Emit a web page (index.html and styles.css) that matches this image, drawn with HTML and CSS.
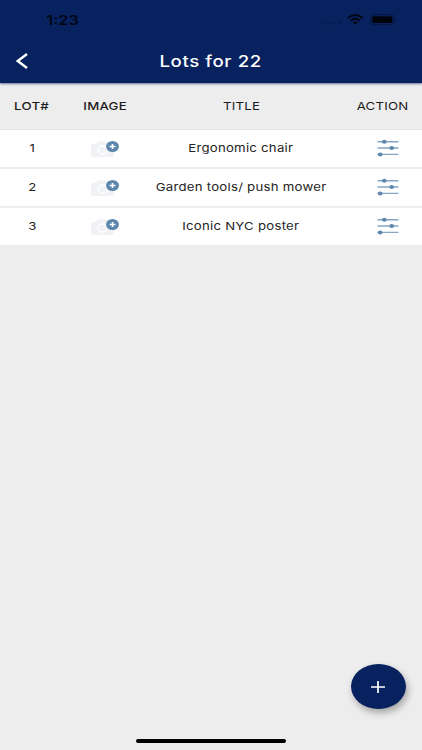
FILE: index.html
```html
<!DOCTYPE html>
<html lang="en">
<head>
    <meta charset="UTF-8">
    <meta name="viewport" content="width=device-width, initial-scale=1.0">
    <title>Lots for 22</title>
    <link rel="stylesheet" href="styles.css">
</head>
<body>
    <svg class="symbols" width="0" height="0">
        <symbol id="camera" viewBox="0 0 30 20">
            <path fill="#f0f2f5" d="M3 5h3l2-2.500h9l2 2.500h3q2 0 2 2v9q0 2-2 2H3q-2 0-2-2V7q0-2 2-2z"/>
            <ellipse cx="12.500" cy="11" rx="4.700" ry="4" fill="none" stroke="#fff" stroke-width="1.400"/>
            <ellipse cx="22.500" cy="7.500" rx="6.400" ry="5.500" fill="#5c86ac"/>
            <path d="M19.600 7.500h5.800M22.500 4.900v5.200" stroke="#fff" stroke-width="1.600"/>
        </symbol>
        <symbol id="sliders" viewBox="0 0 22 18">
            <path d="M.5 2.700h21M.5 9h21M.5 15.400h21" stroke="#86a5c1" stroke-width="1.400"/>
            <g fill="#5f88ab">
                <ellipse cx="7.300" cy="2.700" rx="2.400" ry="2"/>
                <ellipse cx="14.700" cy="9" rx="2.400" ry="2"/>
                <ellipse cx="3.200" cy="15.400" rx="2.400" ry="2"/>
            </g>
        </symbol>
    </svg>

    <header class="app-bar">
        <div class="status">
            <span class="time wide">1:23</span>
            <svg class="status-icons" width="78" height="14" viewBox="0 0 78 14">
                <g fill="#071b50">
                    <circle cx="3" cy="10.300" r="1.300"/>
                    <circle cx="8.500" cy="10.300" r="1.300"/>
                    <circle cx="14" cy="10.300" r="1.300"/>
                    <circle cx="19.500" cy="10.300" r="1.300"/>
                </g>
                <g fill="none" stroke="#010617" stroke-width="1.900">
                    <path d="M27.800 5.100Q35.200-.9 42.600 5.100"/>
                    <path d="M30.500 7.700Q35.200 4 39.900 7.700"/>
                </g>
                <path fill="#010617" d="M32.600 9.500q2.600-1.800 5.200 0L35.200 11.700z"/>
                <rect x="50.500" y="1.700" width="24" height="9.800" rx="2.800" fill="none" stroke="#061642"/>
                <rect x="52" y="3.200" width="20.500" height="6.800" rx="1.500" fill="#00020c"/>
                <path fill="#061642" d="M76 5q1.500 1.600 0 3.200z"/>
            </svg>
        </div>
        <div class="nav">
            <svg class="back" width="14" height="18" viewBox="0 0 14 18">
                <path d="M12 2L2.700 9l9.300 7" fill="none" stroke="#fff" stroke-width="2.400"/>
            </svg>
            <h1 class="title wide">Lots for 22</h1>
        </div>
    </header>

    <main class="lots">
        <div class="row head">
            <div class="cell"><span class="wide strong">LOT#</span></div>
            <div class="cell"><span class="wide strong">IMAGE</span></div>
            <div class="cell"><span class="wide">TITLE</span></div>
            <div class="cell action"><span class="wide">ACTION</span></div>
        </div>
        <div class="row">
            <div class="cell"><span class="wide">1</span></div>
            <div class="cell"><svg width="30" height="20"><use href="#camera"/></svg></div>
            <div class="cell"><span class="wide">Ergonomic chair</span></div>
            <div class="cell action"><svg width="22" height="18"><use href="#sliders"/></svg></div>
        </div>
        <div class="row">
            <div class="cell"><span class="wide">2</span></div>
            <div class="cell"><svg width="30" height="20"><use href="#camera"/></svg></div>
            <div class="cell"><span class="wide">Garden tools/ push mower</span></div>
            <div class="cell action"><svg width="22" height="18"><use href="#sliders"/></svg></div>
        </div>
        <div class="row">
            <div class="cell"><span class="wide">3</span></div>
            <div class="cell"><svg width="30" height="20"><use href="#camera"/></svg></div>
            <div class="cell"><span class="wide">Iconic NYC poster</span></div>
            <div class="cell action"><svg width="22" height="18"><use href="#sliders"/></svg></div>
        </div>
    </main>

    <button class="add" aria-label="Add lot">
        <svg width="16" height="14" viewBox="0 0 16 14">
            <path d="M1 7h14M8 1v12" stroke="#fff" stroke-width="1.700"/>
        </svg>
    </button>
    <div class="home-bar"></div>
</body>
</html>
```

FILE: styles.css
```css
body {
    margin: 0;
    height: 750px;
    position: relative;
    overflow: hidden;
    background: #ededed;
    color: #252525;
    font-family: Inter, "Liberation Sans", sans-serif;
    font-size: 11px;
    letter-spacing: 0.2px;
}

.symbols {
    position: absolute;
}

.wide {
    display: inline-block;
    transform: scaleX(1.2);
    white-space: nowrap;
}

.app-bar {
    height: 83px;
    background: #08225f;
    box-shadow: 0 1px 2px rgba(8, 34, 95, 0.6);
    position: relative;
}

.status {
    display: flex;
    align-items: center;
    justify-content: space-between;
    height: 40px;
    padding: 0 24px 0 49px;
}

.time {
    color: #010617;
    font-size: 13.5px;
    font-weight: 600;
    letter-spacing: 0;
}

.nav {
    display: grid;
    grid-template-columns: 44px 1fr 44px;
    align-items: center;
    justify-items: center;
    height: 42px;
}

.title {
    margin: 0;
    color: #fff;
    font-size: 15.5px;
    font-weight: 500;
    letter-spacing: 0.5px;
}

.row {
    display: grid;
    grid-template-columns: 64px 82px 190px 86px;
    align-items: center;
    height: 37px;
    margin-bottom: 2px;
    background: #fff;
}

.row:last-child {
    margin-bottom: 0;
}

.row .wide {
    margin-bottom: 1px;
}

.head {
    height: 47px;
    margin: 0;
    border-bottom: 1px solid #e6e6e6;
    box-sizing: border-box;
    background: none;
    color: #1c1c1c;
}

.head .wide {
    margin-bottom: 0;
}

.cell {
    display: flex;
    align-items: center;
    justify-content: center;
}

.action {
    padding-left: 18px;
}

.action svg {
    margin-bottom: 2px;
}

.head .action {
    padding-left: 8px;
}

.strong {
    font-weight: 500;
}

.add {
    position: absolute;
    left: 351px;
    top: 664px;
    display: flex;
    align-items: center;
    justify-content: center;
    width: 55px;
    height: 45px;
    padding: 0 1px 0 0;
    border: none;
    border-radius: 50%;
    background: #08225f;
    box-shadow: 2px 4px 7px rgba(0, 0, 0, 0.3);
}

.home-bar {
    position: absolute;
    left: 136px;
    top: 739px;
    width: 150px;
    height: 4px;
    border-radius: 2px;
    background: #000;
}
```
